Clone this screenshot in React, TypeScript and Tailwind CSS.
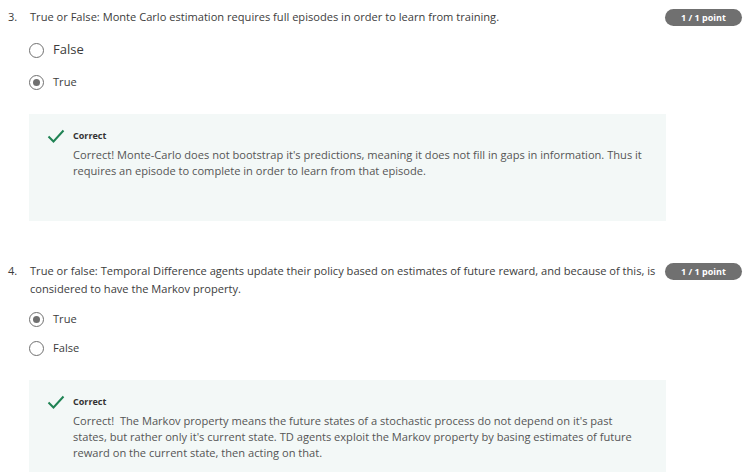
import React from "react";

type Option = { label: string; selected: boolean; big?: boolean };

type Question = {
  num: string;
  text: string;
  options: Option[];
  feedback: string;
};

const questions: Question[] = [
  {
    num: "3.",
    text: "True or False: Monte Carlo estimation requires full episodes in order to learn from training.",
    options: [
      { label: "False", selected: false, big: true },
      { label: "True", selected: true },
    ],
    feedback:
      "Correct! Monte-Carlo does not bootstrap it's predictions, meaning it does not fill in gaps in information. Thus it requires an episode to complete in order to learn from that episode.",
  },
  {
    num: "4.",
    text: "True or false: Temporal Difference agents update their policy based on estimates of future reward, and because of this, is considered to have the Markov property.",
    options: [
      { label: "True", selected: true },
      { label: "False", selected: false },
    ],
    feedback:
      "Correct!  The Markov property means the future states of a stochastic process do not depend on it's past states, but rather only it's current state. TD agents exploit the Markov property by basing estimates of future reward on the current state, then acting on that.",
  },
];

function Radio({ selected }: { selected: boolean }) {
  return (
    <span className="w-[15px] h-[15px] rounded-full border-[1.5px] border-[#707070] flex items-center justify-center shrink-0">
      {selected && <span className="w-[7px] h-[7px] rounded-full bg-[#707070]" />}
    </span>
  );
}

function Check() {
  return (
    <svg width="18" height="15" viewBox="0 0 18 15" className="shrink-0">
      <path d="M1.5 7.5 L6.5 12.5 L16.5 1.5" fill="none" stroke="#1f8354" strokeWidth="2" />
    </svg>
  );
}

function QuestionBlock({ q, last }: { q: Question; last?: boolean }) {
  return (
    <div className={last ? "" : "mb-[41px]"}>
      <div className="flex items-start">
        <span className="w-[22px] shrink-0 text-[11.1px] leading-[18px] text-[#3c3c3c]">{q.num}</span>
        <p className="flex-1 text-[11.1px] leading-[18px] text-[#3c3c3c]">{q.text}</p>
        <span className="shrink-0 ml-[4px] w-[77px] h-[17px] mt-[1px] rounded-full bg-[#707070] text-white text-[9px] font-bold flex items-center justify-center">
          1 / 1 point
        </span>
      </div>
      <div className="ml-[21px] mt-[12px] flex flex-col gap-[11px]">
        {q.options.map((o) => (
          <label key={o.label} className={o.big ? "flex items-center gap-[9px] h-[24px]" : "flex items-center gap-[9px] h-[18px]"}>
            <Radio selected={o.selected} />
            <span className={o.big ? "text-[13px] text-[#3c3c3c]" : "text-[11.1px] text-[#3c3c3c]"}>{o.label}</span>
          </label>
        ))}
      </div>
      <div className="ml-[21px] w-[637px] mt-[23px] bg-[#f3f8f7] pl-[18px] pr-[20px] pt-[15px] pb-[42px] flex gap-[8px]">
        <Check />
        <div>
          <div className="text-[9px] font-bold text-[#333] leading-[14px]">Correct</div>
          <p className="mt-[4px] text-[11.1px] leading-[16px] text-[#555] whitespace-pre-wrap">{q.feedback}</p>
        </div>
      </div>
    </div>
  );
}

export default function App() {
  return (
    <div className="w-[747px] h-[472px] overflow-hidden bg-white pl-[8px] pt-[8px] pr-[5px]" style={{ fontFamily: '"Open Sans", sans-serif' }}>
      {questions.map((q, i) => (
        <QuestionBlock key={q.num} q={q} last={i === questions.length - 1} />
      ))}
    </div>
  );
}
